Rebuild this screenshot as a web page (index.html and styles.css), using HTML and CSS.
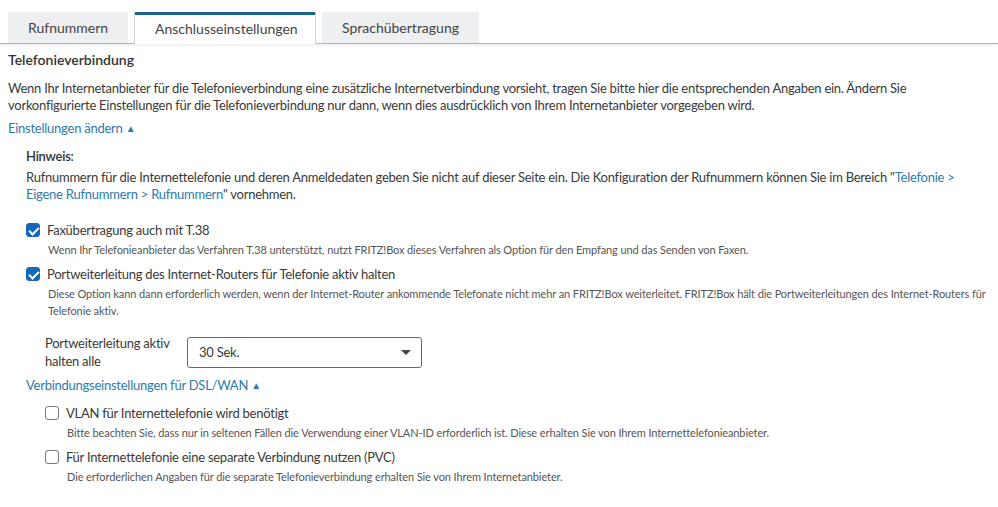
FILE: index.html
```html
<!DOCTYPE html>
<html lang="de">
  <head>
    <meta charset="UTF-8" />
    <title>Telefonie - Anschlusseinstellungen</title>
    <link rel="stylesheet" href="styles.css">
  </head>
  <body>
    <div class="tabs">
      <div class="tab">Rufnummern</div>
      <div class="tab active">Anschlusseinstellungen</div>
      <div class="tab">Sprachübertragung</div>
    </div>

    <div class="content">
      <h2>Telefonieverbindung</h2>
      <p class="intro">
        Wenn Ihr Internetanbieter für die Telefonieverbindung eine zusätzliche Internetverbindung vorsieht, tragen Sie bitte hier die entsprechenden Angaben ein. Ändern Sie vorkonfigurierte Einstellungen für die Telefonieverbindung nur dann, wenn dies ausdrücklich von Ihrem Internetanbieter vorgegeben wird.
      </p>
      <a class="toggle">Einstellungen ändern <span class="arrow">&#9650;</span></a>

      <div class="section">
        <div class="hint-title">Hinweis:</div>
        <p class="hint">
          Rufnummern für die Internettelefonie und deren Anmeldedaten geben Sie nicht auf dieser Seite ein. Die Konfiguration der Rufnummern können Sie im Bereich "<a>Telefonie&nbsp;&gt; Eigene Rufnummern &gt; Rufnummern</a>" vornehmen.
        </p>

        <div class="option">
          <label class="check-row"><span class="box checked"></span>Faxübertragung auch mit T.38</label>
          <div class="help">Wenn Ihr Telefonieanbieter das Verfahren T.38 unterstützt, nutzt FRITZ!Box dieses Verfahren als Option für den Empfang und das Senden von Faxen.</div>
        </div>

        <div class="option">
          <label class="check-row"><span class="box checked"></span>Portweiterleitung des Internet-Routers für Telefonie aktiv halten</label>
          <div class="help">Diese Option kann dann erforderlich werden, wenn der Internet-Router ankommende Telefonate nicht mehr an FRITZ!Box weiterleitet. FRITZ!Box hält die Portweiterleitungen des Internet-Routers für Telefonie aktiv.</div>
        </div>

        <div class="field">
          <label class="field-label">Portweiterleitung aktiv halten alle</label>
          <div class="select">
            <span>30 Sek.</span>
            <span class="caret"></span>
          </div>
        </div>

        <a class="toggle">Verbindungseinstellungen für DSL/WAN <span class="arrow">&#9650;</span></a>

        <div class="sub">
          <div class="option">
            <label class="check-row"><span class="box"></span>VLAN für Internettelefonie wird benötigt</label>
            <div class="help">Bitte beachten Sie, dass nur in seltenen Fällen die Verwendung einer VLAN-ID erforderlich ist. Diese erhalten Sie von Ihrem Internettelefonieanbieter.</div>
          </div>
          <div class="option">
            <label class="check-row"><span class="box"></span>Für Internettelefonie eine separate Verbindung nutzen (PVC)</label>
            <div class="help">Die erforderlichen Angaben für die separate Telefonieverbindung erhalten Sie von Ihrem Internetanbieter.</div>
          </div>
        </div>
      </div>
    </div>
  </body>
</html>
```

FILE: styles.css
```css
* {
  margin: 0;
  padding: 0;
  box-sizing: border-box;
}

body {
  font-family: Lato, "Source Sans Pro", Arial, sans-serif;
  font-size: 13px;
  letter-spacing: -0.25px;
  color: #3a3a3a;
  background-color: #fff;
}

a {
  color: #2d7bab;
  cursor: pointer;
}

.tabs {
  display: flex;
  gap: 6px;
  padding: 12px 0 0 8px;
  border-bottom: 1px solid #b5b5b5;
  box-shadow: 0 2px 2px rgba(0, 0, 0, 0.06);
}

.tab {
  height: 31px;
  line-height: 31px;
  padding: 0 20px;
  font-size: 14px;
  letter-spacing: 0;
  text-align: center;
  color: #444;
  background-color: #eeeff1;
  border-radius: 2px 2px 0 0;
}

.tab:first-child {
  width: 120px;
}

.tab:nth-child(3) {
  width: 157px;
}

.tab.active {
  width: 182px;
  height: 32px;
  line-height: 28px;
  margin-bottom: -1px;
  background-color: #fff;
  border: 1px solid #d4d4d4;
  border-top: 3px solid #1d6591;
  border-bottom: none;
}

.content {
  padding: 6px 8px 0 8px;
}

h2 {
  font-size: 14px;
  font-weight: 600;
  letter-spacing: 0;
  color: #333;
  margin-bottom: 10px;
  line-height: 20px;
}

.intro {
  line-height: 17px;
  margin-bottom: 5px;
}

.toggle {
  display: inline-block;
  line-height: 18px;
}

.arrow {
  font-size: 10px;
  vertical-align: 1px;
}

.section {
  padding: 10px 0 0 18px;
}

.hint-title {
  font-weight: 600;
  color: #333;
  line-height: 18px;
  margin-bottom: 4px;
}

.hint {
  line-height: 17px;
  margin-bottom: 17px;
}

.option {
  margin-bottom: 6px;
}

.check-row {
  display: flex;
  align-items: center;
  gap: 7px;
  line-height: 20px;
}

.box {
  width: 14px;
  height: 14px;
  border: 1px solid #777;
  border-radius: 3px;
  background-color: #fff;
  flex-shrink: 0;
  position: relative;
}

.box.checked {
  background-color: #1766b8;
  border-color: #1766b8;
}

.box.checked::after {
  content: "";
  position: absolute;
  left: 3.5px;
  top: 0.5px;
  width: 4px;
  height: 8px;
  border: solid #fff;
  border-width: 0 2px 2px 0;
  transform: rotate(45deg);
}

.help {
  font-size: 11px;
  letter-spacing: -0.1px;
  color: #555;
  line-height: 17px;
  padding: 1px 0 0 22px;
}

.field {
  display: flex;
  align-items: center;
  gap: 12px;
  padding: 9px 0 0 19px;
  margin-bottom: 6px;
}

.field-label {
  width: 130px;
  line-height: 18px;
}

.select {
  width: 235px;
  height: 31px;
  border: 1px solid #666;
  border-radius: 3px;
  display: flex;
  align-items: center;
  justify-content: space-between;
  padding: 0 10px 0 11px;
}

.caret {
  width: 0;
  height: 0;
  border-left: 5px solid transparent;
  border-right: 5px solid transparent;
  border-top: 5px solid #444;
}

.sub {
  padding: 9px 0 0 19px;
}
```
